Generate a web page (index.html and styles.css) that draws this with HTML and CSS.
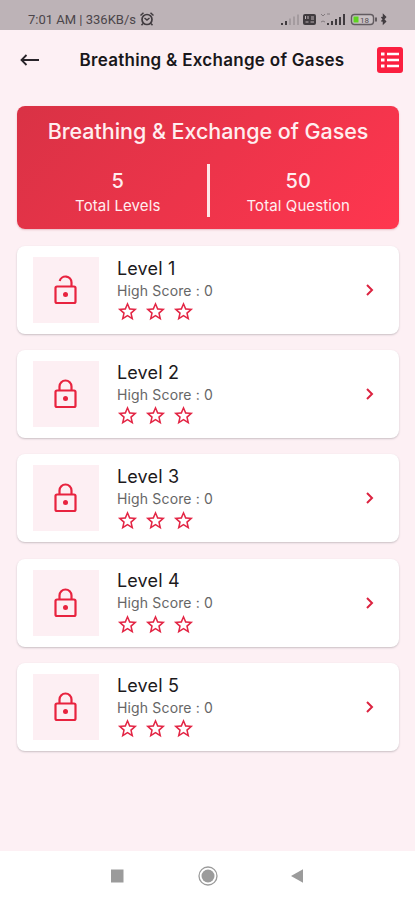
FILE: index.html
```html
<!DOCTYPE html>
<html lang="en">
<head>
    <meta charset="UTF-8">
    <meta name="viewport" content="width=device-width, initial-scale=1.0">
    <title>Breathing &amp; Exchange of Gases</title>
    <link rel="stylesheet" href="styles.css">
</head>
<body>
    <svg class="sprite">
        <symbol id="lock" viewBox="0 0 24 30">
            <rect x="1.5" y="11.5" width="20" height="16.5" rx="1.5" fill="none" stroke="currentColor" stroke-width="2.2"/>
            <path d="M5.5 11V7.5a6 6 0 0 1 12 0V11" fill="none" stroke="currentColor" stroke-width="2.2"/>
            <circle cx="11.5" cy="19.5" r="2.5" fill="currentColor"/>
        </symbol>
        <symbol id="lock-open" viewBox="0 0 24 30">
            <rect x="1.5" y="11.5" width="20" height="16.5" rx="1.5" fill="none" stroke="currentColor" stroke-width="2.2"/>
            <path d="M5.700 6A6 6 0 0 1 17.500 7.500V11" fill="none" stroke="currentColor" stroke-width="2.2"/>
            <circle cx="11.5" cy="19.5" r="2.5" fill="currentColor"/>
        </symbol>
        <symbol id="star" viewBox="0 0 24 24">
            <path d="M22 9.240l-7.190-.62L12 2 9.190 8.630 2 9.240l5.460 4.730L5.820 21 12 17.270 18.180 21l-1.630-7.030L22 9.240zM12 15.400l-3.760 2.270 1-4.280-3.320-2.880 4.380-.38L12 6.100l1.710 4.040 4.380.38-3.320 2.880 1 4.280L12 15.400z" fill="currentColor"/>
        </symbol>
        <symbol id="chevron" viewBox="0 0 10 14">
            <path d="M2 2l5 5-5 5" fill="none" stroke="currentColor" stroke-width="2"/>
        </symbol>
    </svg>

    <div class="status-bar">
        <span class="status-time">7:01 AM | 336KB/s</span>
        <svg class="alarm" width="16" height="16" viewBox="0 0 16 16">
            <circle cx="8" cy="8.5" r="5" fill="none" stroke="#403b3f" stroke-width="1.7"/>
            <path d="M1.500 4.500l3-2.700M14.500 4.500l-3-2.700M4 12.500l-1.500 1.700M12 12.500l1.500 1.700M5.500 7l2.500 2 2.500-2" fill="none" stroke="#403b3f" stroke-width="1.5"/>
        </svg>
        <svg class="status-icons" width="108" height="16" viewBox="0 0 108 16">
            <g fill="#403b3f">
                <path d="M1 12h2v2H1zM5 10h2v4H5z"/>
                <path d="M9 7.500h2V14H9zM13 5.500h2V14h-2zM17 3.500h2V14h-2z" opacity=".2"/>
                <rect x="23" y="3" width="13" height="11" rx="2"/>
                <path d="M47 12h2v2h-2zM51 10h2v4h-2zM55 8h2v6h-2zM59 6h2v8h-2zM63 3h2v11h-2z"/>
            </g>
            <path d="M25.500 5v3M28 5v3M31 6h3M31 8h3M25.500 11h3M30.500 11h3.500" stroke="#bdb3b7" fill="none"/>
            <path d="M41 3l2 2 2-2M47 3h3M41 11l2-1 2 1" stroke="#827a7e" fill="none"/>
            <rect x="71.500" y="3.500" width="22" height="10" rx="3" fill="#c9c1c4" stroke="#625b60" stroke-width="1.400"/>
            <path d="M73.500 5.500h5v6h-5z" fill="#5ed321"/>
            <text class="battery-text" x="80" y="11.500">18</text>
            <path d="M95 6.500h2v4h-2z" fill="#625b60"/>
            <path d="M101.500 6l4 4.500-2 2V4l2 2-4 4.500" fill="none" stroke="#403b3f" stroke-width="1.500"/>
        </svg>
    </div>

    <div class="header">
        <svg class="back" width="20" height="14" viewBox="0 0 20 14">
            <path d="M6.500 2L1.500 7l5 5M2 7h17" fill="none" stroke="#29252a" stroke-width="1.800"/>
        </svg>
        <h1>Breathing &amp; Exchange of Gases</h1>
        <svg class="list" width="26" height="26" viewBox="0 0 26 26">
            <rect width="26" height="26" rx="3" fill="#fb1f3f"/>
            <path d="M4 7h3.500M4 13h3.500M4 19h3.500" stroke="#fff" stroke-width="3"/>
            <path d="M10 7h12M10 13h12M10 19h12" stroke="#fff" stroke-width="2.500"/>
        </svg>
    </div>

    <div class="summary">
        <h2>Breathing &amp; Exchange of Gases</h2>
        <div class="stats">
            <div class="stat">
                <div class="number">5</div>
                <div class="label">Total Levels</div>
            </div>
            <div class="divider"></div>
            <div class="stat">
                <div class="number">50</div>
                <div class="label">Total Question</div>
            </div>
        </div>
    </div>

    <div class="levels-list">
        <div class="card">
            <div class="thumb"><svg><use href="#lock-open"/></svg></div>
            <div class="info">
                <div class="name">Level 1</div>
                <div class="score">High Score : 0</div>
                <div class="stars"><svg><use href="#star"/></svg><svg><use href="#star"/></svg><svg><use href="#star"/></svg></div>
            </div>
            <svg class="chevron"><use href="#chevron"/></svg>
        </div>
        <div class="card">
            <div class="thumb"><svg><use href="#lock"/></svg></div>
            <div class="info">
                <div class="name">Level 2</div>
                <div class="score">High Score : 0</div>
                <div class="stars"><svg><use href="#star"/></svg><svg><use href="#star"/></svg><svg><use href="#star"/></svg></div>
            </div>
            <svg class="chevron"><use href="#chevron"/></svg>
        </div>
        <div class="card">
            <div class="thumb"><svg><use href="#lock"/></svg></div>
            <div class="info">
                <div class="name">Level 3</div>
                <div class="score">High Score : 0</div>
                <div class="stars"><svg><use href="#star"/></svg><svg><use href="#star"/></svg><svg><use href="#star"/></svg></div>
            </div>
            <svg class="chevron"><use href="#chevron"/></svg>
        </div>
        <div class="card">
            <div class="thumb"><svg><use href="#lock"/></svg></div>
            <div class="info">
                <div class="name">Level 4</div>
                <div class="score">High Score : 0</div>
                <div class="stars"><svg><use href="#star"/></svg><svg><use href="#star"/></svg><svg><use href="#star"/></svg></div>
            </div>
            <svg class="chevron"><use href="#chevron"/></svg>
        </div>
        <div class="card">
            <div class="thumb"><svg><use href="#lock"/></svg></div>
            <div class="info">
                <div class="name">Level 5</div>
                <div class="score">High Score : 0</div>
                <div class="stars"><svg><use href="#star"/></svg><svg><use href="#star"/></svg><svg><use href="#star"/></svg></div>
            </div>
            <svg class="chevron"><use href="#chevron"/></svg>
        </div>
    </div>

    <div class="nav-bar">
        <svg width="20" height="20" viewBox="0 0 20 20"><path d="M3 3.500h12.500v13H3z" fill="#9b9b9b"/></svg>
        <svg width="20" height="20" viewBox="0 0 20 20">
            <circle cx="10" cy="10" r="9" fill="none" stroke="#9b9b9b" stroke-width="1.300"/>
            <circle cx="10" cy="10" r="6.500" fill="#9b9b9b"/>
        </svg>
        <svg width="20" height="20" viewBox="0 0 20 20"><path d="M3 10l12-6.800v13.600z" fill="#9b9b9b"/></svg>
    </div>
</body>
</html>
```
FILE: styles.css
```css
* {
    box-sizing: border-box;
}

body {
    margin: 0;
    height: 900px;
    display: flex;
    flex-direction: column;
    background-color: #fdf0f4;
    font-family: Inter, Roboto, sans-serif;
    overflow: hidden;
}

svg {
    display: block;
    flex: none;
}

h1, h2 {
    margin: 0;
    white-space: nowrap;
}

.sprite {
    display: none;
}

.status-bar {
    height: 30px;
    padding: 8px 27px 0 28px;
    display: flex;
    background-color: #bdb3b7;
    color: #4b454a;
}

.status-time {
    font-family: Roboto, sans-serif;
    font-size: 13px;
    line-height: 23px;
    white-space: nowrap;
}

.alarm {
    margin: 3px 0 0 3px;
}

.status-icons {
    margin: 3px 0 0 auto;
}

.battery-text {
    font: 8px Roboto, sans-serif;
    fill: #514b50;
}

.header {
    height: 60px;
    padding: 0 12px 0 20px;
    display: flex;
    align-items: center;
    justify-content: space-between;
}

.header h1 {
    margin-left: 7px;
    font-size: 17px;
    font-weight: 600;
    letter-spacing: 0.28px;
    color: #19171a;
}

.summary {
    height: 123px;
    margin: 16px 16px 0 17px;
    padding-top: 11px;
    border-radius: 8px;
    background: linear-gradient(135deg, #d93245, #ff364f);
    color: #ffeef0;
    text-align: center;
    box-shadow: 0 1px 2px #e6bec6;
}

.summary h2 {
    font-size: 21.5px;
    font-weight: 500;
    line-height: 28px;
    letter-spacing: -0.05px;
}

.stats {
    display: flex;
    margin-top: 19px;
}

.stat {
    flex: 1;
    padding-top: 4px;
}

.divider {
    width: 3px;
    height: 53px;
    background-color: #ffe6e8;
}

.stat:first-child {
    padding-left: 12px;
}

.stat:last-child {
    padding-right: 12px;
}

.number {
    font-size: 20px;
    font-weight: 500;
    line-height: 26px;
}

.label {
    font-size: 15px;
    line-height: 24px;
    letter-spacing: 0.1px;
}

.levels-list {
    margin: 17px 16px 0 17px;
    display: flex;
    flex-direction: column;
    gap: 16.2px;
}

.card {
    height: 88px;
    padding: 0 24px 0 16px;
    display: flex;
    align-items: center;
    border-radius: 8px;
    background-color: #fff;
    box-shadow: 0 1px 2px #c9bfc4;
}

.thumb {
    width: 66px;
    height: 66px;
    display: flex;
    align-items: center;
    justify-content: center;
    background-color: #fdeff3;
    color: #e8233f;
}

.thumb svg {
    width: 24px;
    height: 30px;
}

.info {
    flex: 1;
    margin-left: 18px;
}

.name {
    font-size: 18px;
    line-height: 24px;
    letter-spacing: 0.15px;
    color: #1c1a1c;
}

.score {
    font-size: 14px;
    line-height: 20px;
    letter-spacing: 0.15px;
    color: #666;
}

.stars {
    display: flex;
    gap: 5px;
    margin: -0.5px 0 0 -1.5px;
    color: #e32645;
}

.stars svg {
    width: 23px;
    height: 23px;
}

.chevron {
    width: 10px;
    height: 14px;
    color: #dc2340;
}

.nav-bar {
    height: 49px;
    margin-top: auto;
    padding: 0 107px 0 108px;
    display: flex;
    align-items: center;
    justify-content: space-between;
    background-color: #fff;
}
```
